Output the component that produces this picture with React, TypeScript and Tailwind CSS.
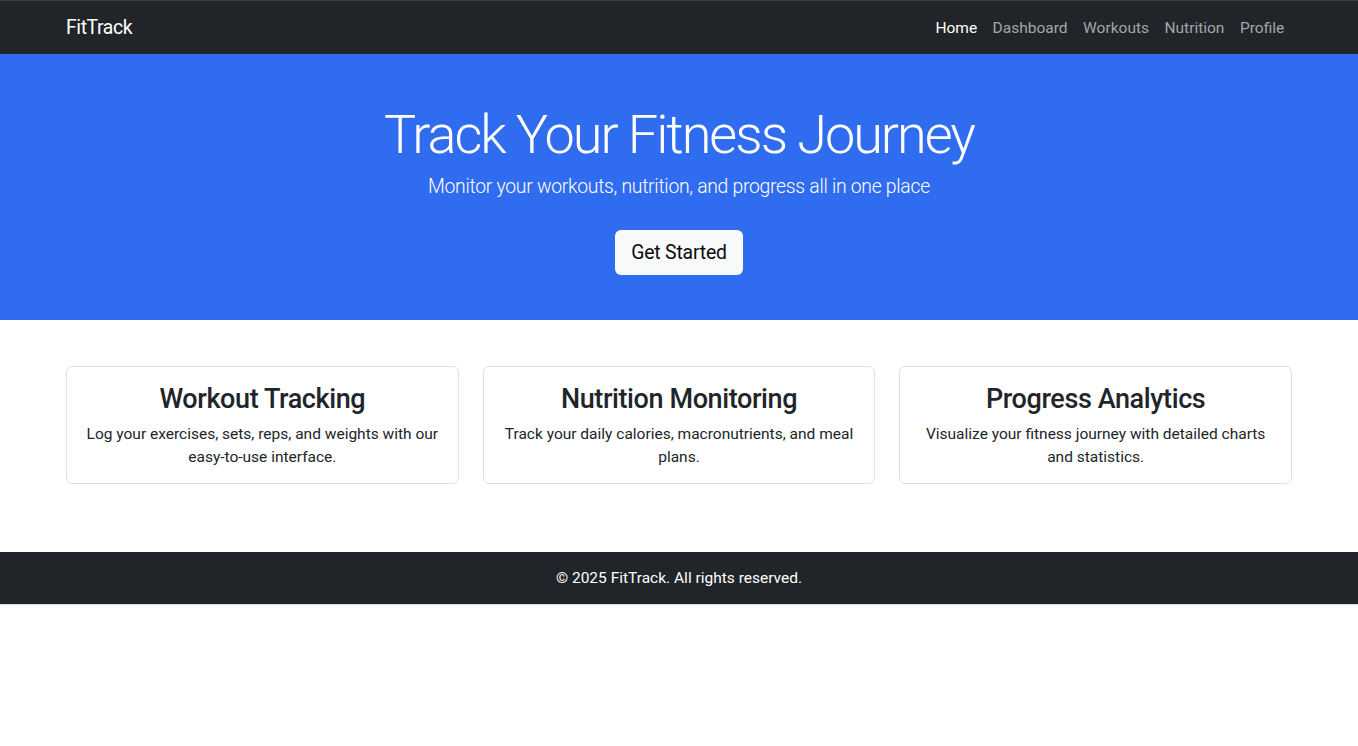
export default function App() {
  const features = [
    {
      title: "Workout Tracking",
      text: "Log your exercises, sets, reps, and weights with our easy-to-use interface.",
    },
    {
      title: "Nutrition Monitoring",
      text: "Track your daily calories, macronutrients, and meal plans.",
    },
    {
      title: "Progress Analytics",
      text: "Visualize your fitness journey with detailed charts and statistics.",
    },
  ];

  return (
    <div className="min-h-screen bg-white text-[#212529] font-['Roboto','Liberation_Sans',sans-serif]">
      {/* Navbar */}
      <nav className="h-[54px] bg-[#212529] border-t border-[#3d3e40]">
        <div className="h-full px-[66px] flex items-center justify-between">
          <a className="text-[19.4px] text-white pt-[1px] tracking-[-0.4px]">FitTrack</a>
          <ul className="flex items-center pt-[1px]">
            {["Home", "Dashboard", "Workouts", "Nutrition", "Profile"].map((l, i) => (
              <li key={l}>
                <a
                  className={
                    "px-[7.75px] text-[15.5px] " +
                    (i === 0 ? "text-white" : "text-[#a4a6a8]")
                  }
                >
                  {l}
                </a>
              </li>
            ))}
          </ul>
        </div>
      </nav>

      {/* Hero */}
      <section className="h-[266px] bg-[#306cf0] text-white flex flex-col items-center pt-[48px]">
        <h1 className="text-[54px] font-light leading-[65px] tracking-[-2px]">
          Track Your Fitness Journey
        </h1>
        <p className="mt-[5px] text-[19.4px] font-light leading-[29px] tracking-[-0.3px]">
          Monitor your workouts, nutrition, and progress all in one place
        </p>
        <button className="mt-[29px] w-[128px] h-[45px] bg-[#f8f9fa] text-[#0b0b0b] text-[19.4px] rounded-[6px] tracking-[-0.2px]">
          Get Started
        </button>
      </section>

      {/* Features */}
      <section className="pt-[46px] pb-[68px] px-[66px]">
        <div className="grid grid-cols-3 gap-[24px]">
          {features.map((f) => (
            <div
              key={f.title}
              className="border border-[#dee2e6] rounded-[6px] px-[15.5px] pt-[16px] pb-[14px] text-center"
            >
              <h3 className="text-[27px] font-medium leading-[32.5px] tracking-[-0.4px]">
                {f.title}
              </h3>
              <p className="mt-[7px] text-[15.5px] leading-[23px]">{f.text}</p>
            </div>
          ))}
        </div>
      </section>

      {/* Footer */}
      <footer className="h-[53px] bg-[#212529] border-b border-[#d9dadc] flex items-center justify-center">
        <p className="text-white text-[15.5px] pt-[2px]">© 2025 FitTrack. All rights reserved.</p>
      </footer>
    </div>
  );
}
